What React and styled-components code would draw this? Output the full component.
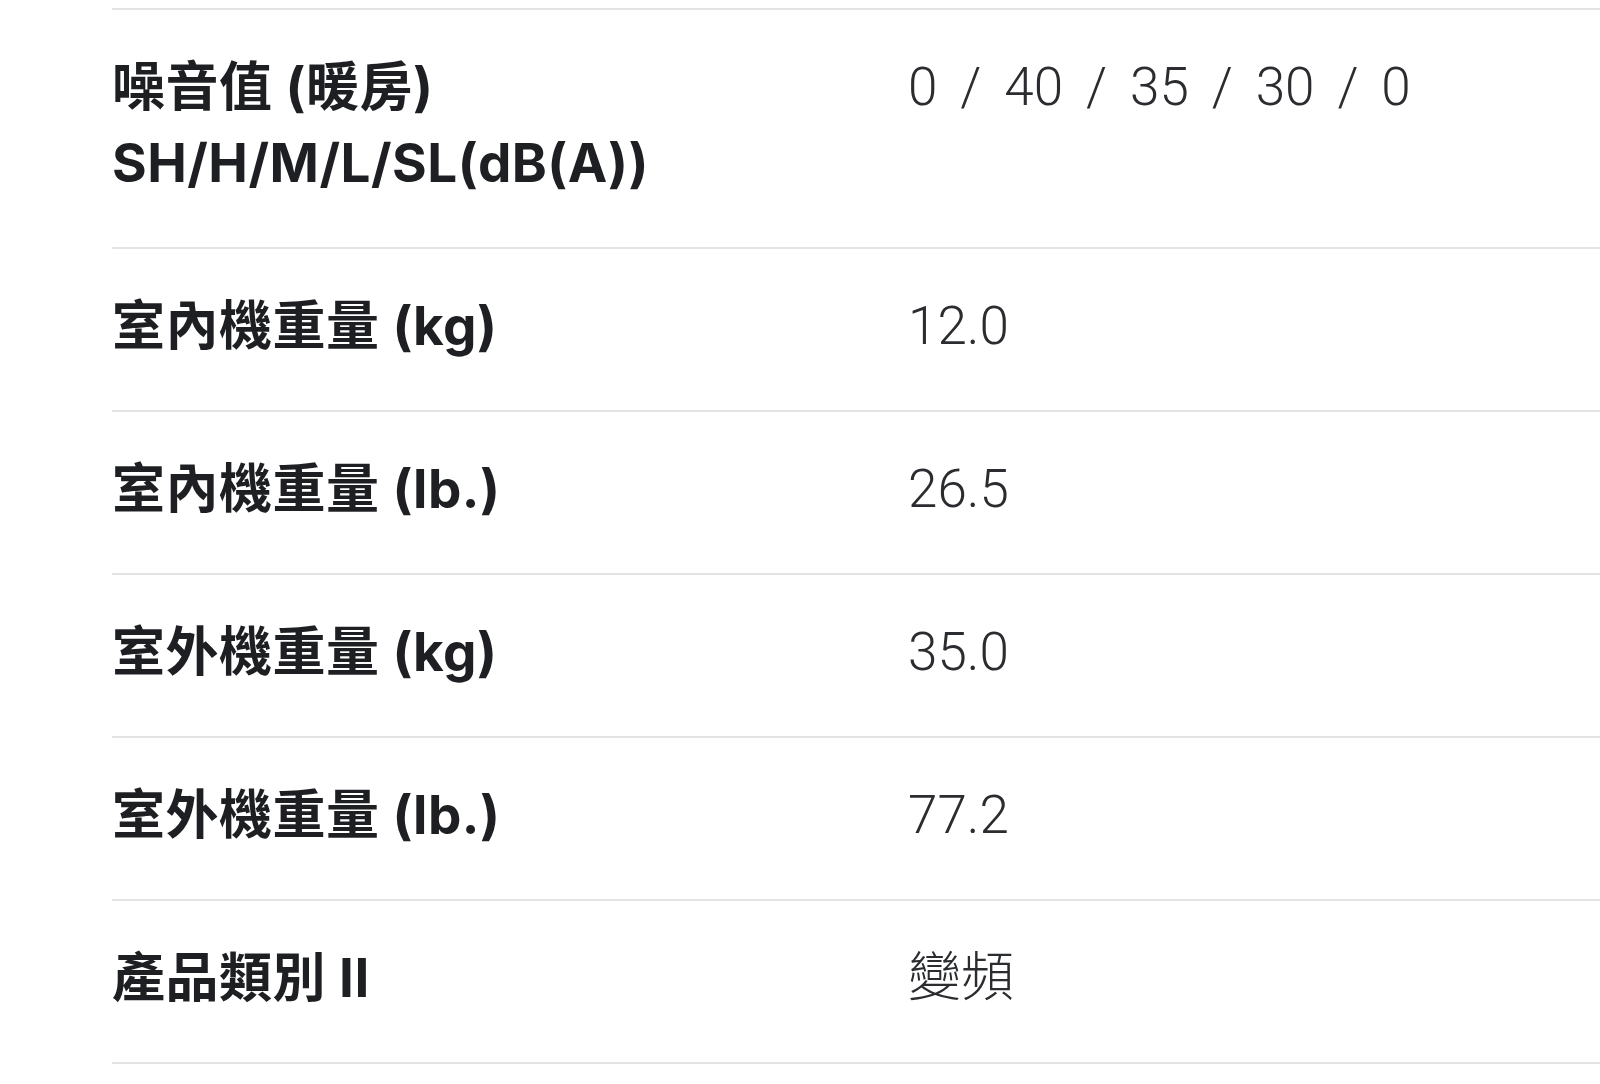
import React from 'react';
import styled, { createGlobalStyle } from 'styled-components';

const GlobalStyle = createGlobalStyle`
  html, body {
    margin: 0;
    padding: 0;
    background: #fff;
    overflow: hidden;
  }
`;

const specs = [
  { label: ['噪音值 (暖房)', 'SH/H/M/L/SL(dB(A))'], value: '0 / 40 / 35 / 30 / 0', spaced: true },
  { label: ['室內機重量 (kg)'], value: '12.0' },
  { label: ['室內機重量 (lb.)'], value: '26.5' },
  { label: ['室外機重量 (kg)'], value: '35.0' },
  { label: ['室外機重量 (lb.)'], value: '77.2' },
  { label: ['產品類別 II'], value: '變頻' },
];

const App = () => (
  <>
    <GlobalStyle />
    <Page>
      <SpecTable>
        {specs.map((row, i) => (
          <SpecRow key={i}>
            <Label>
              {row.label.map((line, j) => (
                <span key={j}>{line}</span>
              ))}
            </Label>
            <Value spaced={row.spaced}>{row.value}</Value>
          </SpecRow>
        ))}
      </SpecTable>
    </Page>
  </>
);

const Page = styled.div`
  padding: 8px 0 0 112px;
  width: 1700px;
`;

const SpecTable = styled.div`
  display: flex;
  flex-direction: column;
  border-bottom: 2px solid #e3e3e3;
`;

const SpecRow = styled.div`
  display: grid;
  grid-template-columns: 796px 1fr;
  border-top: 2px solid #e3e3e3;
  padding: 39px 0 46px;
`;

const Label = styled.div`
  display: flex;
  flex-direction: column;
  font-family: Inter, "Noto Sans CJK TC", sans-serif;
  font-weight: 700;
  font-size: 53px;
  letter-spacing: 0.5px;
  line-height: 76px;
  color: #1d1f22;
`;

const Value = styled.div`
  font-family: Roboto, "Noto Sans CJK TC", sans-serif;
  font-weight: 300;
  font-size: 53px;
  line-height: 76px;
  color: #2a2c2f;
  word-spacing: ${(p) => (p.spaced ? '10px' : '0')};
`;

export default App;
